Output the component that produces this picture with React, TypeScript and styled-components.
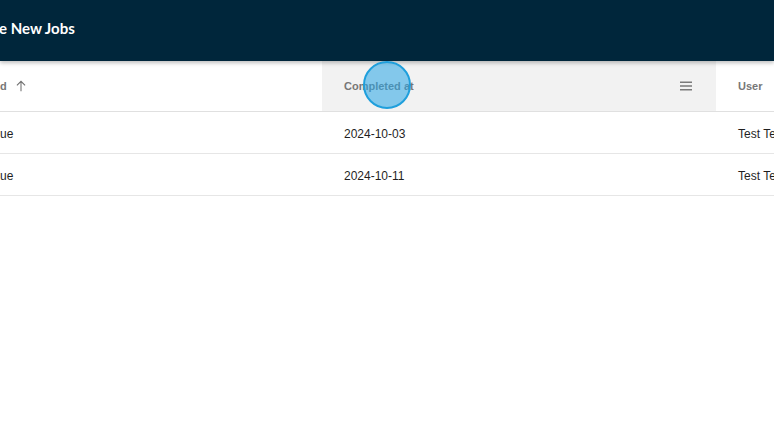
import React from "react";
import styled, { createGlobalStyle } from "styled-components";

const Global = createGlobalStyle`
  html, body { margin: 0; padding: 0; background: #ffffff; }
  body { font-family: "Liberation Sans", Arial, sans-serif; overflow: hidden; }
`;

const Page = styled.div`
  width: 774px;
  height: 433px;
  overflow: hidden;
  position: relative;
  background: #fff;
`;

const TopBar = styled.header`
  height: 61px;
  background: #00263b;
  display: flex;
  align-items: center;
  position: relative;
  z-index: 2;
  box-shadow: 0 2px 4px rgba(0, 0, 0, 0.25);
`;

const Title = styled.h1`
  margin: 0 0 0 -1px;
  font-family: Lato, "Noto Sans", sans-serif;
  font-weight: 700;
  font-size: 15px;
  color: #ffffff;
  padding-bottom: 5px;
`;

const Table = styled.div`
  display: grid;
  grid-template-columns: 322px 394px 58px;
`;

const HeadCell = styled.div<{ $active?: boolean; $pad?: number; $padRight?: number }>`
  height: 50px;
  display: flex;
  align-items: center;
  padding-left: ${(p) => p.$pad ?? 0}px;
  padding-right: ${(p) => p.$padRight ?? 0}px;
  background: ${(p) => (p.$active ? "#f2f2f2" : "#fff")};
  border-bottom: 1px solid #e0e0e0;
  font-size: 11px;
  font-weight: 700;
  color: #777777;
  white-space: nowrap;
  overflow: hidden;
  position: relative;
`;

const HeadLabel = styled.span`
  flex: 1;
`;

const SortIcon = styled.svg`
  margin-left: 7px;
  flex: none;
`;

const Cell = styled.div<{ $pad?: number }>`
  height: 41px;
  display: flex;
  align-items: center;
  padding-left: ${(p) => p.$pad ?? 0}px;
  padding-top: 2px;
  box-sizing: border-box;
  height: 42px;
  border-bottom: 1px solid #e6e6e6;
  font-size: 12px;
  color: #1f1f1f;
  white-space: nowrap;
  overflow: hidden;
`;

const Cursor = styled.div`
  position: absolute;
  left: 363px;
  top: 61px;
  width: 44px;
  height: 44px;
  border-radius: 50%;
  background: rgba(40, 165, 230, 0.55);
  border: 2px solid #1f9fdc;
  z-index: 3;
  pointer-events: none;
`;

export default function App() {
  return (
    <Page>
      <Global />
      <TopBar>
        <Title>e New Jobs</Title>
      </TopBar>
      <Table>
        <HeadCell>
          <span>d</span>
          <SortIcon width="14" height="14" viewBox="0 0 24 24">
            <path d="M12 4v17M5 11l7-7 7 7" fill="none" stroke="#6f6f6f" strokeWidth="1.8" />
          </SortIcon>
        </HeadCell>
        <HeadCell $active $pad={22} $padRight={23}>
          <HeadLabel>Completed at</HeadLabel>
          <svg width="14" height="10" viewBox="0 0 14 10">
            <rect x="1" y="0.5" width="12" height="1.5" fill="#7a7a7a" />
            <rect x="1" y="4.25" width="12" height="1.5" fill="#7a7a7a" />
            <rect x="1" y="8" width="12" height="1.5" fill="#7a7a7a" />
          </svg>
        </HeadCell>
        <HeadCell $pad={22}>
          <span>User</span>
        </HeadCell>

        <Cell>ue</Cell>
        <Cell $pad={22}>2024-10-03</Cell>
        <Cell $pad={22}>Test Test</Cell>

        <Cell>ue</Cell>
        <Cell $pad={22}>2024-10-11</Cell>
        <Cell $pad={22}>Test Test</Cell>
      </Table>
      <Cursor />
    </Page>
  );
}
